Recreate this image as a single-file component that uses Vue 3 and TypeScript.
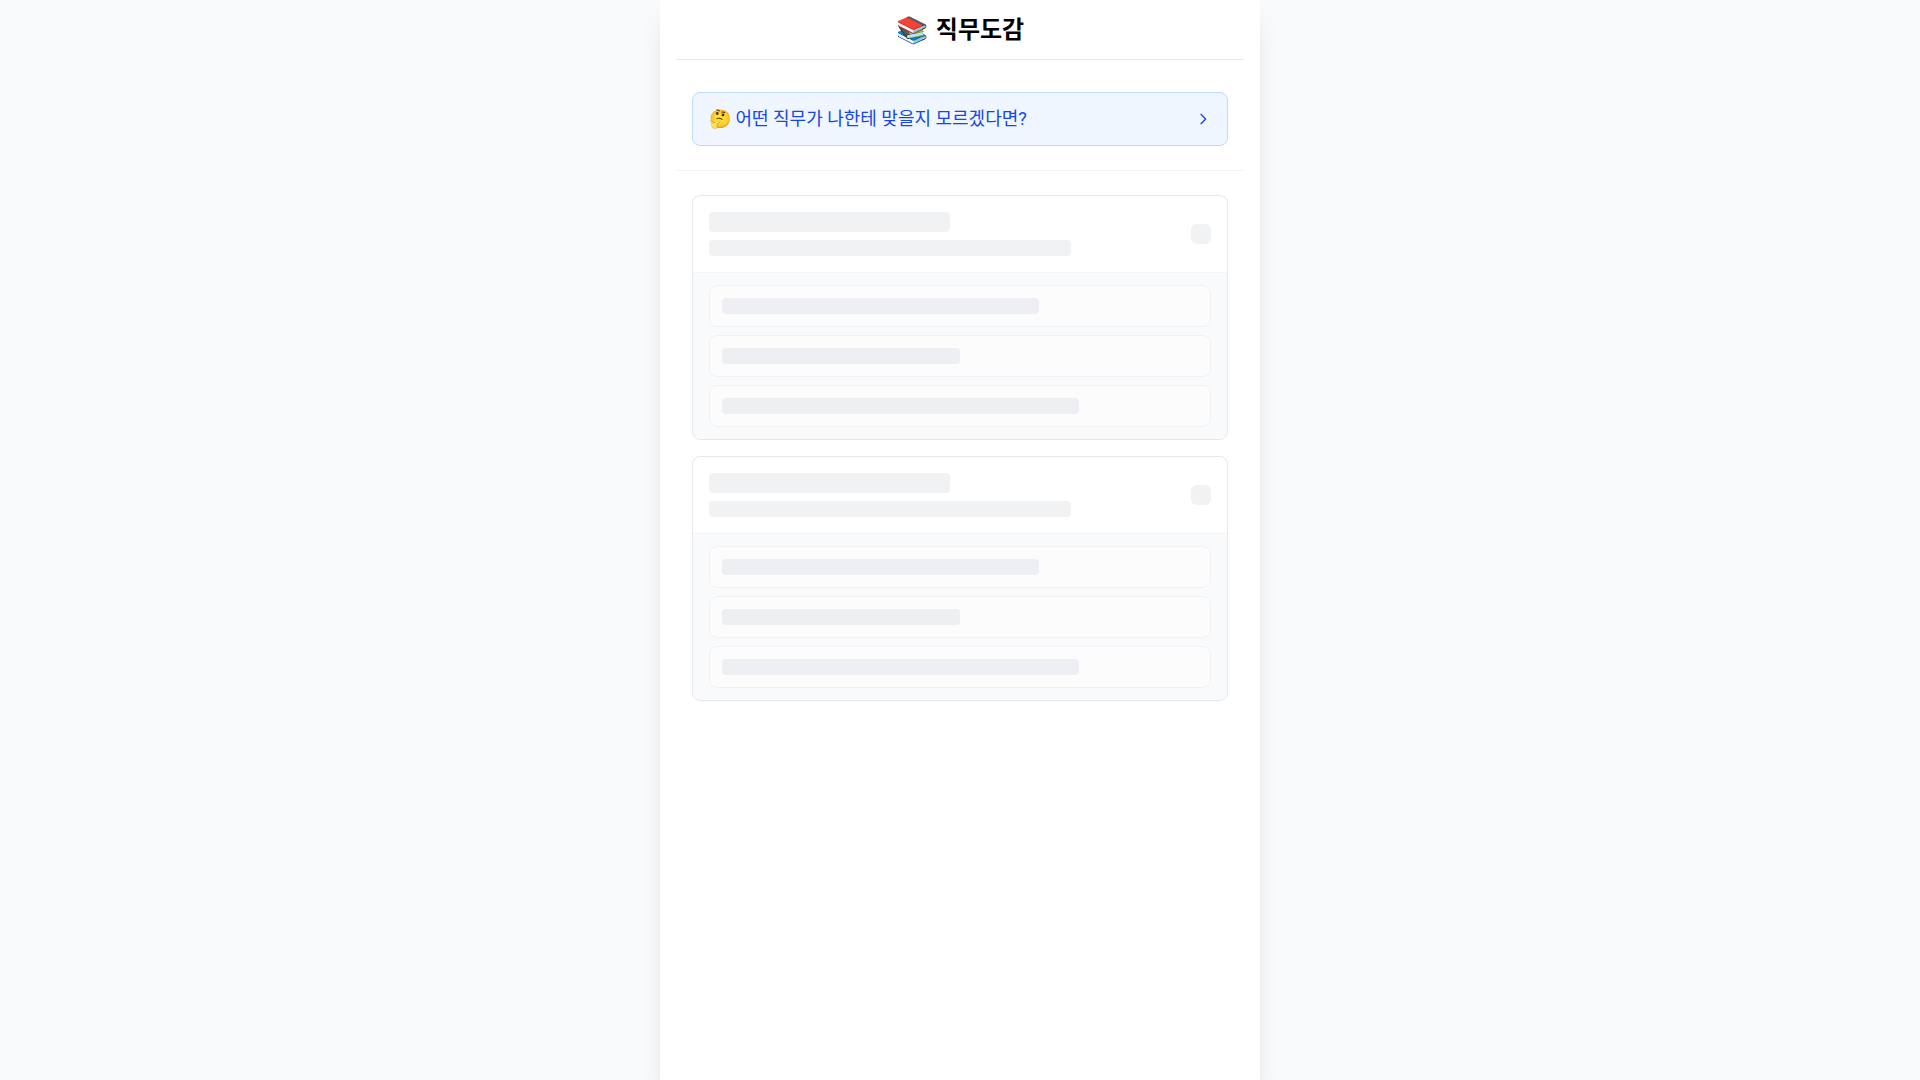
<script setup lang="ts">
interface SkeletonCard {
  id: number
  rows: string[]
}

const rows: string[] = ['two-thirds', 'half', 'three-quarters']
const cards: SkeletonCard[] = [
  { id: 1, rows },
  { id: 2, rows },
]
</script>

<template>
  <div class="page">
    <div class="column">
      <header class="header">
        <span class="logo" aria-hidden="true">📚</span>
        <h1 class="title">직무도감</h1>
      </header>

      <section class="banner-section">
        <button type="button" class="banner">
          <span>🤔 어떤 직무가 나한테 맞을지 모르겠다면?</span>
          <svg class="chevron" viewBox="0 0 24 24" aria-hidden="true">
            <path d="M9 5l7 7-7 7" />
          </svg>
        </button>
      </section>

      <main class="cards" aria-busy="true">
        <article v-for="card in cards" :key="card.id" class="card">
          <div class="card-head">
            <div class="card-lines">
              <div class="bar bar-title half"></div>
              <div class="bar three-quarters"></div>
            </div>
            <div class="toggle"></div>
          </div>
          <div class="card-body">
            <div v-for="row in card.rows" :key="row" class="item">
              <div class="bar item-bar" :class="row"></div>
            </div>
          </div>
        </article>
      </main>
    </div>
  </div>
</template>

<style>
body {
  margin: 0;
}
</style>

<style scoped>
.page {
  min-height: 100vh;
  background: #f9fafc;
  font-family: Roboto, "Noto Sans CJK KR", sans-serif;
}

.page * {
  box-sizing: border-box;
}

.column {
  max-width: 600px;
  min-height: 100vh;
  margin: 0 auto;
  padding: 0 16px;
  box-sizing: border-box;
  background: #fff;
  box-shadow: 0 20px 25px -5px rgb(0 0 0 / 10%), 0 8px 10px -6px rgb(0 0 0 / 10%);
}

.header {
  display: flex;
  align-items: center;
  justify-content: center;
  gap: 8px;
  height: 60px;
  border-bottom: 1px solid #e5e7eb;
}

.logo {
  font-size: 26px;
  line-height: 32px;
}

.title {
  margin: 0;
  color: #000;
  font-size: 24px;
  font-weight: 700;
  line-height: 32px;
}

.banner-section {
  padding: 32px 16px 24px;
  border-bottom: 1px solid #f3f4f6;
}

.banner {
  display: flex;
  align-items: center;
  justify-content: space-between;
  width: 100%;
  padding: 12px 16px;
  border: 1px solid #bedbff;
  border-radius: 8px;
  background: #eff6ff;
  color: #1447e6;
  font-family: inherit;
  font-size: 18px;
  line-height: 28px;
  text-align: left;
  cursor: pointer;
}

.chevron {
  width: 16px;
  height: 16px;
  fill: none;
  stroke: currentColor;
  stroke-width: 2;
  stroke-linecap: round;
  stroke-linejoin: round;
}

.cards {
  display: flex;
  flex-direction: column;
  gap: 16px;
  padding: 24px 16px;
}

.card {
  overflow: hidden;
  border: 1px solid #e5e7eb;
  border-radius: 8px;
}

.card-head {
  display: flex;
  align-items: center;
  padding: 16px;
}

.card-lines {
  display: flex;
  flex: 1;
  flex-direction: column;
  gap: 8px;
}

.bar {
  height: 16px;
  border-radius: 4px;
  background: #f1f2f4;
}

.bar-title {
  height: 20px;
}

.item-bar {
  background: #eeeff3;
}

.half {
  width: 50%;
}

.two-thirds {
  width: calc(100% * 2 / 3);
}

.three-quarters {
  width: 75%;
}

.toggle {
  width: 20px;
  height: 20px;
  border-radius: 6px;
  background: #f1f2f4;
}

.card-body {
  display: flex;
  flex-direction: column;
  gap: 8px;
  padding: 12px 16px;
  border-top: 1px solid #f3f4f6;
  background: #f9fafc;
}

.item {
  padding: 12px;
  border: 1px solid #f0f1f4;
  border-radius: 8px;
  background: #fcfcfd;
}
</style>
